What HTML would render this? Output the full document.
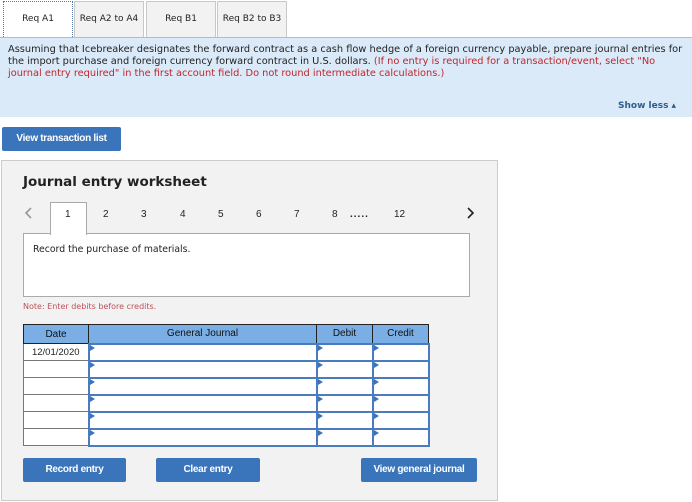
<!DOCTYPE html>
<html><head><style>
*{box-sizing:border-box;margin:0;padding:0}
body{width:692px;height:502px;background:#fff;font-family:"DejaVu Sans",Verdana,sans-serif;position:relative;overflow:hidden;color:#222}
.abs{position:absolute}
.tab{position:absolute;top:1px;height:36px;background:#f2f2f2;border:1px solid #c8c8c8;border-bottom:none;font-size:9px;text-align:center;line-height:34px}
.tab.act{background:#fff;border:1px dotted #5577aa;border-bottom:none}
.info{position:absolute;left:0;top:37px;width:692px;height:80px;background:#dbeaf8;border-top:1px solid #bbb}
.info p{position:absolute;left:8px;top:6px;font-size:9.8px;line-height:12px;white-space:nowrap}
.red{color:#c0272d}
.btn{position:absolute;background:#3a74ba;color:#fff;font-family:"Liberation Sans",Arial,sans-serif;font-weight:bold;font-size:10px;text-align:center;border-radius:2px;letter-spacing:-0.3px}
.panel{position:absolute;left:1px;top:160px;width:497px;height:341px;background:#f2f2f2;border:1px solid #ccc}
.pg{position:absolute;top:209px;font-size:10px;font-family:"Liberation Sans",Arial,sans-serif}
table{position:absolute;left:23px;top:324px;border-collapse:collapse;font-family:"Liberation Sans",Arial,sans-serif;font-size:10px}
th{background:#7aaee5;border:1px solid #222;height:19px;font-weight:normal;color:#111}
td{height:17px;border:1px solid #777;background:#fff;position:relative}
td.in{border:2px solid #4a7bbf}
td.in:before{content:"";position:absolute;left:0;top:0;border-left:5px solid #3a74ba;border-top:3px solid transparent;border-bottom:3px solid transparent}
</style></head><body>
<div class="tab act" style="left:3px;width:70px">Req A1</div>
<div class="tab" style="left:74px;width:70px">Req A2 to A4</div>
<div class="tab" style="left:146px;width:70px">Req B1</div>
<div class="tab" style="left:217px;width:70px">Req B2 to B3</div>
<div class="info"><p>Assuming that Icebreaker designates the forward contract as a cash flow hedge of a foreign currency payable, prepare journal entries for<br>the import purchase and foreign currency forward contract in U.S. dollars. <span class="red">(If no entry is required for a transaction/event, select "No</span><br><span class="red">journal entry required" in the first account field. Do not round intermediate calculations.)</span></p>
<div class="abs" style="left:618px;top:63px;font-size:9px;font-weight:bold;color:#2a5d8f">Show less ▴</div></div>
<div class="btn" style="left:2px;top:127px;width:119px;height:24px;line-height:24px">View transaction list</div>
<div class="panel"></div>
<div class="abs" style="left:23px;top:174px;font-size:13.5px;font-weight:bold;color:#222">Journal entry worksheet</div>
<div class="abs" style="left:23px;top:233px;width:447px;height:64px;background:#fff;border:1px solid #aaa"></div>
<div class="abs" style="left:50px;top:202px;width:37px;height:33px;background:#fff;border:1px solid #aaa;border-bottom:none"></div>
<svg class="abs" style="left:24px;top:206px" width="10" height="14"><path d="M7 2L2 7L7 12" stroke="#999" stroke-width="1.6" fill="none"/></svg>
<div class="pg" style="left:65px">1</div><div class="pg" style="left:103px">2</div><div class="pg" style="left:141px">3</div><div class="pg" style="left:180px">4</div><div class="pg" style="left:218px">5</div><div class="pg" style="left:256px">6</div><div class="pg" style="left:294px">7</div><div class="pg" style="left:332px">8</div><div class="pg" style="left:350px;font-weight:bold;letter-spacing:1px">.....</div><div class="pg" style="left:394px">12</div>
<svg class="abs" style="left:465px;top:206px" width="10" height="14"><path d="M3 2L8 7L3 12" stroke="#222" stroke-width="1.6" fill="none"/></svg>
<div class="abs" style="left:33px;top:244px;font-size:9.3px">Record the purchase of materials.</div>
<div class="abs" style="left:23px;top:302px;font-size:8px;color:#c0505a">Note: Enter debits before credits.</div>
<table>
<tr><th style="width:65px">Date</th><th style="width:228px">General Journal</th><th style="width:56px">Debit</th><th style="width:56px">Credit</th></tr>
<tr><td style="text-align:center;font-size:9.5px">12/01/2020</td><td class="in"></td><td class="in"></td><td class="in"></td></tr>
<tr><td></td><td class="in"></td><td class="in"></td><td class="in"></td></tr>
<tr><td></td><td class="in"></td><td class="in"></td><td class="in"></td></tr>
<tr><td></td><td class="in"></td><td class="in"></td><td class="in"></td></tr>
<tr><td></td><td class="in"></td><td class="in"></td><td class="in"></td></tr>
<tr><td></td><td class="in"></td><td class="in"></td><td class="in"></td></tr>
</table>
<div class="btn" style="left:23px;top:458px;width:103px;height:24px;line-height:24px">Record entry</div>
<div class="btn" style="left:156px;top:458px;width:104px;height:24px;line-height:24px">Clear entry</div>
<div class="btn" style="left:361px;top:458px;width:116px;height:24px;line-height:24px">View general journal</div>
</body></html>
